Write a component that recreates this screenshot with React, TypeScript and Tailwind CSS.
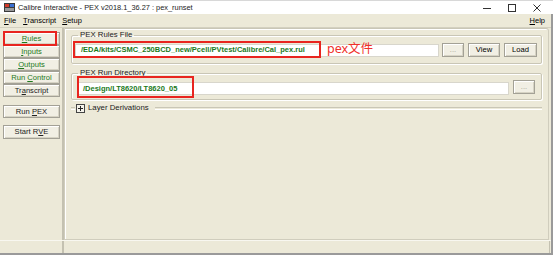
import React from 'react'

const sideButtons = [
  { label: 'Rules', key: 'R', rest: 'ules', green: true },
  { label: 'Inputs', key: 'I', rest: 'nputs', green: true },
  { label: 'Outputs', key: 'O', rest: 'utputs', green: true },
]

function Btn({
  children,
  className = '',
}: {
  children: React.ReactNode
  className?: string
}) {
  return (
    <div
      className={`flex items-center justify-center border border-[#a3a196] bg-[#f1efe4] shadow-[inset_1px_1px_0_#ffffff,inset_-1px_-1px_0_#d6d3c4] text-[7.6px] leading-none ${className}`}
    >
      {children}
    </div>
  )
}

function GroupBox({
  title,
  children,
  className = '',
}: {
  title: string
  children: React.ReactNode
  className?: string
}) {
  return (
    <fieldset
      className={`border border-[#c9c6b6] shadow-[1px_1px_0_#ffffff,inset_1px_1px_0_#ffffff] rounded-[2px] ${className}`}
    >
      <legend className="ml-[6px] px-[2px] text-[7.8px] leading-[10px] text-[#222]">{title}</legend>
      {children}
    </fieldset>
  )
}

export default function App() {
  return (
    <div className="relative w-[553px] h-[255px] bg-[#ece9d8] flex flex-col overflow-hidden font-['Liberation_Sans',sans-serif] text-black">
      {/* Title bar */}
      <div className="h-[14px] bg-white flex items-center border-t border-[#d8d8d8]">
        <svg width="11" height="9" viewBox="0 0 11 9" className="ml-[4px]">
          <rect x="0" y="0" width="11" height="9" fill="#3a3a3a" />
          <rect x="1" y="1" width="4" height="3" fill="#d23a2a" />
          <rect x="6" y="1" width="4" height="3" fill="#3a6fd2" />
          <rect x="1" y="5" width="9" height="3" fill="#9a9a9a" />
        </svg>
        <span className="ml-[3px] text-[7.4px] leading-none text-[#222]">
          Calibre Interactive - PEX v2018.1_36.27 : pex_runset
        </span>
        <div className="ml-auto flex items-center gap-[17px] pr-[12px]">
          <svg width="8" height="8" viewBox="0 0 8 8">
            <line x1="0" y1="4.5" x2="8" y2="4.5" stroke="#333" strokeWidth="1" />
          </svg>
          <svg width="8" height="8" viewBox="0 0 8 8">
            <rect x="0.5" y="0.5" width="7" height="7" fill="none" stroke="#333" strokeWidth="1" />
          </svg>
          <svg width="8" height="8" viewBox="0 0 8 8">
            <path d="M0.5 0.5 L7.5 7.5 M7.5 0.5 L0.5 7.5" stroke="#333" strokeWidth="1" />
          </svg>
        </div>
      </div>

      {/* Menu bar */}
      <div className="h-[14px] flex items-center text-[7.5px] leading-none px-[4px] border-b border-[#d3d0c0]">
        <span>
          <span className="underline">F</span>ile
        </span>
        <span className="ml-[7px]">
          <span className="underline">T</span>ranscript
        </span>
        <span className="ml-[6px]">
          <span className="underline">S</span>etup
        </span>
        <span className="ml-auto pr-[4px]">
          <span className="underline">H</span>elp
        </span>
      </div>

      {/* Body */}
      <div className="flex-1 flex min-h-0">
        {/* Left navigation */}
        <div className="w-[64px] border-r-2 border-r-[#c4c1b1] flex flex-col px-[3px] pt-[4px]">
          {sideButtons.map((b) => (
            <Btn key={b.label} className="h-[13px] w-[57px] text-[#1d7a1d]">
              <span className="underline">{b.key}</span>
              {b.rest}
            </Btn>
          ))}
          <Btn className="h-[13px] w-[57px] text-[#1d7a1d]">
            Run&nbsp;<span className="underline">C</span>ontrol
          </Btn>
          <Btn className="h-[13px] w-[57px] text-[#222]">
            Tr<span className="underline">a</span>nscript
          </Btn>
          <Btn className="h-[13px] w-[57px] mt-[8px] text-[#222]">
            Run&nbsp;<span className="underline">P</span>EX
          </Btn>
          <Btn className="h-[14px] w-[57px] mt-[7px] text-[#222]">
            Start R<span className="underline">V</span>E
          </Btn>
        </div>

        {/* Right pane */}
        <div className="flex-1 pr-[5px]">
          <div className="h-full border border-[#d0cdbd] border-t-[#c9c6b6] shadow-[inset_1px_1px_0_#ffffff] rounded-tr-[3px] pl-[6px] pr-[6px] pt-[1px] flex flex-col">
            <GroupBox title="PEX Rules File" className="h-[34px]">
              <div className="flex items-center pl-[3px] pr-[4px] mt-[3px] gap-[3px]">
                <div className="w-[364px] h-[13px] bg-white border border-[#d8d6cc] flex items-center pl-[5px] text-[7.5px] font-bold text-[#1a7a1a] leading-none">
                  /EDA/kits/CSMC_250BCD_new/Pcell/PVtest/Calibre/Cal_pex.rul
                </div>
                <Btn className="h-[14px] w-[22px] text-[#a7a595]">...</Btn>
                <Btn className="h-[14px] w-[32px] ml-[1px]">View</Btn>
                <Btn className="h-[14px] w-[33px] ml-[1px]">Load</Btn>
              </div>
            </GroupBox>

            <GroupBox title="PEX Run Directory" className="h-[32px] mt-[4px]">
              <div className="flex items-center pl-[5px] pr-[4px] mt-[4px] gap-[4px]">
                <div className="w-[432px] h-[13px] bg-white border border-[#d8d6cc] flex items-center pl-[5px] text-[7.5px] font-bold text-[#1a7a1a] leading-none">
                  /Design/LT8620/LT8620_05
                </div>
                <Btn className="h-[14px] w-[22px] text-[#a7a595] -mt-[3px]">...</Btn>
              </div>
            </GroupBox>

            {/* Layer Derivations collapsed group */}
            <div className="flex items-center h-[14px] mt-[1px]">
              <div className="w-[4px] h-[2px] border-t border-[#c9c6b6] shadow-[0_1px_0_#ffffff]" />
              <div className="ml-[1px] w-[9px] h-[9px] border border-[#444] bg-[#f4f2ea] flex items-center justify-center">
                <svg width="5" height="5" viewBox="0 0 5 5">
                  <path d="M0 2.5 H5 M2.5 0 V5" stroke="#222" strokeWidth="1" />
                </svg>
              </div>
              <span className="ml-[3px] text-[7.8px] leading-none text-[#222]">Layer Derivations</span>
              <div className="ml-[6px] flex-1 h-[2px] border-t border-[#c9c6b6] shadow-[0_1px_0_#ffffff]" />
            </div>
          </div>
        </div>
      </div>

      {/* Status strip */}
      <div className="h-[13px] border-t border-[#f8f7f0] flex">
        <div className="w-[64px] border-r-2 border-r-[#c4c1b1]" />
        <div className="flex-1 mr-[3px] border-r border-[#c4c1b1]" />
      </div>
      <div className="h-[2px] bg-[#9a9a9a]" />

      {/* Window right edge */}
      <div className="absolute right-0 top-[14px] bottom-0 w-[2px] bg-[#9a9a9a]" />

      {/* Red annotation boxes */}
      <div className="absolute left-[3px] top-[31px] w-[54px] h-[15px] border-2 border-[#e8251f]" />
      <div className="absolute left-[73px] top-[41px] w-[248px] h-[17px] border-2 border-[#e8251f]" />
      <div className="absolute left-[77px] top-[76px] w-[117px] h-[22px] border-2 border-[#e8251f]" />
      <span className="absolute left-[327px] top-[41px] text-[12.5px] leading-[15px] text-[#f0302a] font-['Noto_Sans','Noto_Sans_CJK_SC',sans-serif]">
        pex文件
      </span>
    </div>
  )
}
